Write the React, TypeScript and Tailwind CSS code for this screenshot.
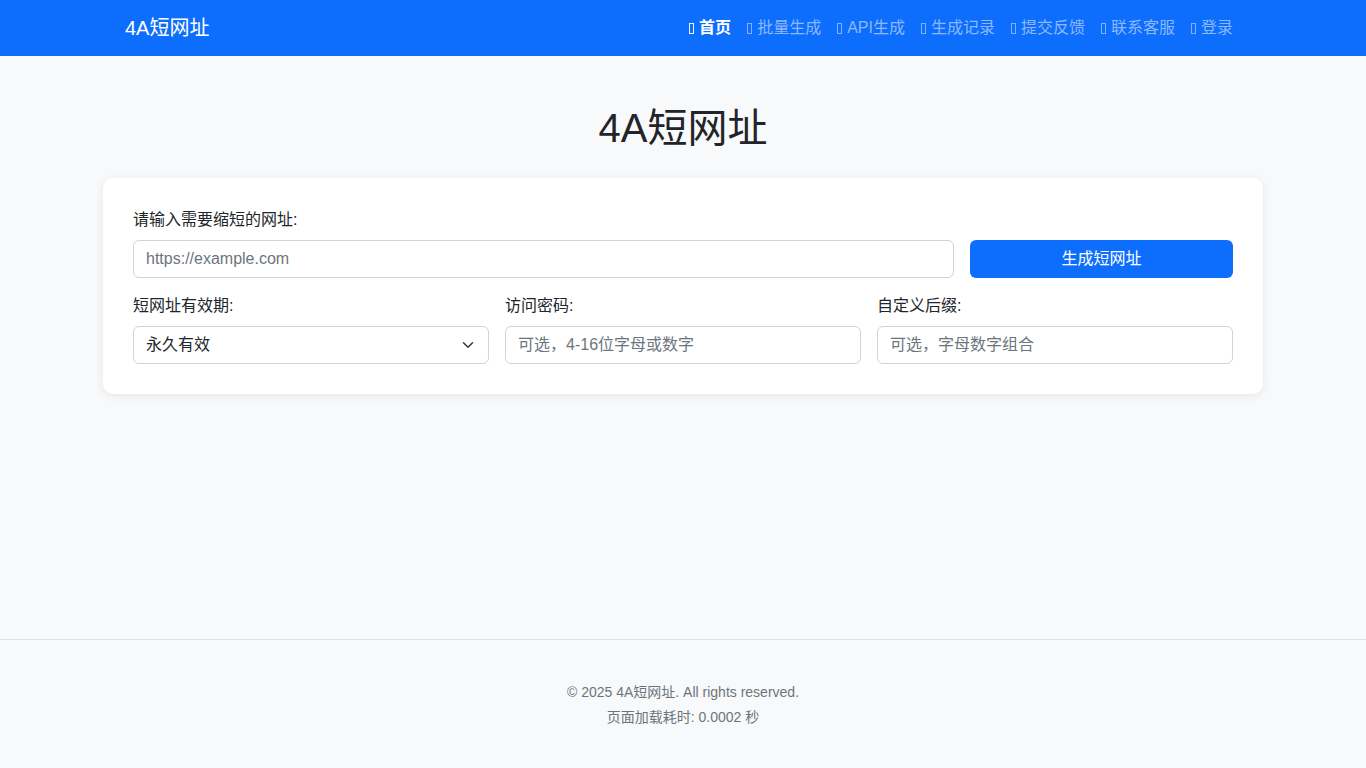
import React from 'react';

const font = { fontFamily: '"Liberation Sans", "Noto Sans CJK SC", sans-serif' };

function Tofu() {
  return <span className="inline-block w-[5px] h-[11px] border border-current mr-[5px] align-[-1px] opacity-90" />;
}

const links = ['批量生成', 'API生成', '生成记录', '提交反馈', '联系客服', '登录'];

export default function App() {
  return (
    <div className="min-h-[768px] flex flex-col bg-[#f8f9fa] text-[#212529]" style={font}>
      <nav className="bg-[#0d6efd] h-14">
        <div className="w-[1140px] mx-auto px-3 h-full flex items-center justify-between">
          <span className="text-white text-[20px] leading-[30px]">4A短网址</span>
          <div className="flex items-center text-[16px]">
            <span className="px-2 text-white font-bold">
              <Tofu />首页
            </span>
            {links.map((l) => (
              <span key={l} className="px-2 text-[#8cb8fe]">
                <Tofu />{l}
              </span>
            ))}
          </div>
        </div>
      </nav>

      <main className="flex-1">
        <div className="w-[1160px] mx-auto pt-[48px]">
          <h1 className="text-center text-[40px] leading-[48px] font-normal">4A短网址</h1>
          <div className="mt-[26px] bg-white rounded-[10px] shadow-[0_2px_10px_rgba(0,0,0,0.08)] p-[30px]">
            <label className="block text-[16px] leading-6 mb-2">请输入需要缩短的网址:</label>
            <div className="flex gap-4">
              <input
                className="flex-1 h-[38px] border border-[#ced4da] rounded-[6px] px-3 text-[16px] placeholder:text-[#6c757d] outline-none"
                placeholder="https://example.com"
              />
              <button className="w-[263px] h-[38px] bg-[#0d6efd] text-white rounded-[6px] text-[16px]">生成短网址</button>
            </div>
            <div className="grid grid-cols-3 gap-4 mt-4">
              <div>
                <label className="block text-[16px] leading-6 mb-2">短网址有效期:</label>
                <div className="h-[38px] border border-[#ced4da] rounded-[6px] pl-3 pr-[14px] flex items-center justify-between text-[16px]">
                  <span>永久有效</span>
                  <svg width="12" height="12" viewBox="0 0 16 16" fill="none" stroke="#343a40" strokeWidth="2" strokeLinecap="round" strokeLinejoin="round">
                    <path d="m2 5 6 6 6-6" />
                  </svg>
                </div>
              </div>
              <div>
                <label className="block text-[16px] leading-6 mb-2">访问密码:</label>
                <input
                  className="w-full h-[38px] border border-[#ced4da] rounded-[6px] px-3 text-[16px] placeholder:text-[#6c757d] outline-none"
                  placeholder="可选，4-16位字母或数字"
                />
              </div>
              <div>
                <label className="block text-[16px] leading-6 mb-2">自定义后缀:</label>
                <input
                  className="w-full h-[38px] border border-[#ced4da] rounded-[6px] px-3 text-[16px] placeholder:text-[#6c757d] outline-none"
                  placeholder="可选，字母数字组合"
                />
              </div>
            </div>
          </div>
        </div>
      </main>

      <footer className="border-t border-[#dee2e6] h-[129px] pt-[42px] text-center text-[14px] text-[#6c757d]">
        <p className="leading-[21px]">© 2025 4A短网址. All rights reserved.</p>
        <p className="leading-[21px] mt-[4px]">页面加载耗时: 0.0002 秒</p>
      </footer>
    </div>
  );
}
